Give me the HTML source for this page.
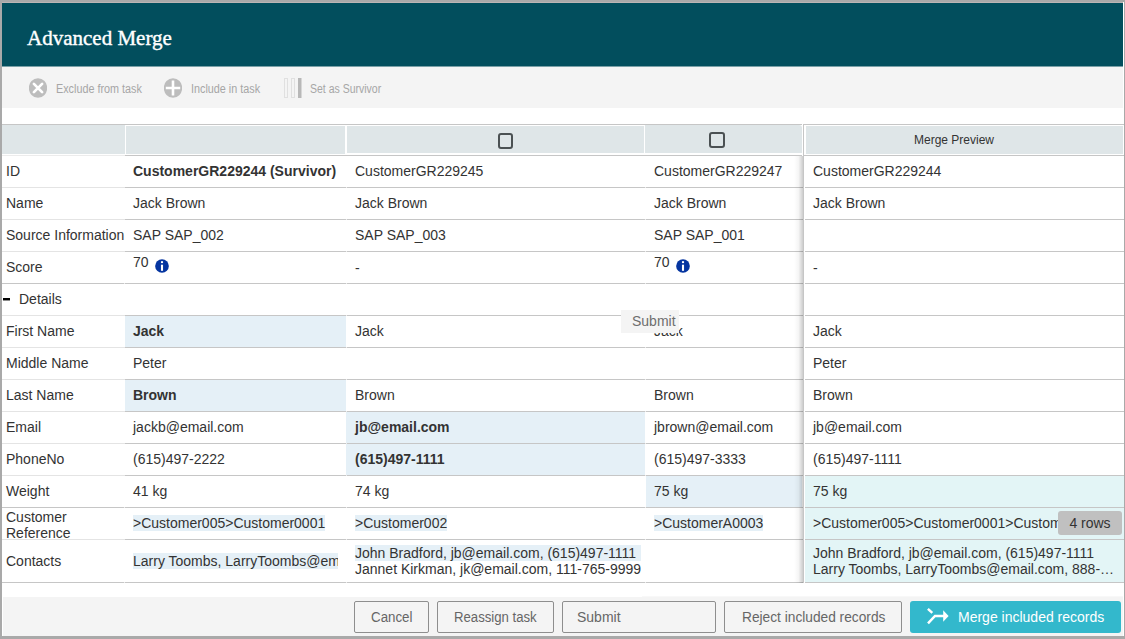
<!DOCTYPE html>
<html><head><meta charset="utf-8">
<style>
html,body{margin:0;padding:0;}
body{width:1125px;height:639px;position:relative;overflow:hidden;background:#a9a9a9;font-family:"Liberation Sans",sans-serif;}
.a{position:absolute;}
#dlg{left:2px;top:2px;width:1122px;height:634px;background:#fff;}
#topline{left:2px;top:2px;width:1121px;height:1px;background:#bcb5b5;}
#hdr{left:2px;top:3px;width:1121px;height:63px;background:#024e5d;}
#title{left:27px;top:25px;font-family:"Liberation Serif",serif;font-size:22px;color:#fff;white-space:nowrap;-webkit-text-stroke:0.4px #fff;transform:scaleX(0.955);transform-origin:0 0;}
#tb{left:2px;top:66px;width:1121px;height:42px;background:#f4f4f4;}
.tbt{font-size:12px;color:#a6a6a6;white-space:nowrap;top:82px;transform:scaleX(0.9);transform-origin:0 0;}
.t{font-size:14px;color:#333;white-space:nowrap;line-height:16px;}
.b{font-weight:bold;}
.hl{background:#e5f0f7;}
.mp{background:#e3f5f6;}
.ln{height:1px;background:#c6c6c6;}
.lnl{height:1px;background:#e4e4e4;}
.btn{top:601px;height:30px;border:1px solid #8e8e8e;border-radius:2px;background:#f4f4f4;box-sizing:content-box;}
.bt{top:609px;font-size:14px;line-height:16px;color:#666;white-space:nowrap;transform-origin:0 0;}
</style></head>
<body>
<div class="a" id="dlg"></div>
<div class="a" id="topline"></div>
<div class="a" id="hdr"></div>
<div class="a" id="title">Advanced Merge</div>
<div class="a" id="tb"></div>
<div class="a" style="left:2px;top:66px;width:1121px;height:1px;background:#7aa0a7"></div>

<!-- toolbar -->
<svg class="a" style="left:29px;top:78px" width="18" height="20" viewBox="0 0 18 20">
 <ellipse cx="9" cy="10" rx="9.2" ry="9.8" fill="#bdbdbd"/>
 <path d="M4.9 5.9 L13.1 14.1 M13.1 5.9 L4.9 14.1" stroke="#fff" stroke-width="2.7" stroke-linecap="round"/>
</svg>
<div class="a tbt" style="left:56px">Exclude from task</div>
<svg class="a" style="left:164px;top:78px" width="18" height="20" viewBox="0 0 18 20">
 <ellipse cx="9" cy="10" rx="9.2" ry="9.8" fill="#bdbdbd"/>
 <path d="M9 2.5 V17.5 M1.8 10 H16.2" stroke="#fff" stroke-width="2.6"/>
</svg>
<div class="a tbt" style="left:191px">Include in task</div>
<svg class="a" style="left:284px;top:78px" width="18" height="20" viewBox="0 0 18 20">
 <rect x="0.5" y="0.5" width="3" height="19" fill="none" stroke="#e0e0e0"/>
 <rect x="7.5" y="0.5" width="3" height="19" fill="none" stroke="#e0e0e0"/>
 <rect x="14" y="0" width="3.5" height="20" fill="#b8b8b8"/>
</svg>
<div class="a tbt" style="left:310px;transform:scaleX(.875)">Set as Survivor</div>

<!-- table header -->
<div class="a ln" style="left:2px;top:124px;width:800px;"></div>
<div class="a ln" style="left:804px;top:124px;width:320px;"></div>
<div class="a" style="left:2px;top:125px;width:123px;height:29px;background:#dfe6e8"></div>
<div class="a" style="left:126px;top:126px;width:219px;height:28px;background:#dfe6e8"></div>
<div class="a" style="left:347px;top:126px;width:297px;height:27px;background:#dfe6e8"></div>
<div class="a" style="left:645px;top:125px;width:157px;height:28px;background:#dfe6e8;border-top-right-radius:3px"></div>
<div class="a" style="left:806px;top:126px;width:317px;height:28px;background:#dfe6e8"></div>
<div class="a" style="left:498px;top:133px;width:11px;height:12px;border:2px solid #4b5153;border-radius:3px"></div>
<div class="a" style="left:709px;top:132px;width:12px;height:12px;border:2px solid #4b5153;border-radius:3px"></div>
<div class="a" style="left:914px;top:126px;line-height:28px;font-size:12px;color:#333;white-space:nowrap">Merge Preview</div>
<div class="a" style="left:2px;top:155px;width:123px;height:1px;background:#ececec"></div><div class="a ln" style="left:125px;top:155px;width:677px;"></div>
<div class="a ln" style="left:804px;top:155px;width:320px;"></div>

<div id="rows">
<div class="a t" style="left:6px;top:163px">ID</div>
<div class="a t b" style="left:133px;top:163px">CustomerGR229244 (Survivor)</div>
<div class="a t" style="left:355px;top:163px">CustomerGR229245</div>
<div class="a t" style="left:654px;top:163px">CustomerGR229247</div>
<div class="a t" style="left:813px;top:163px">CustomerGR229244</div>
<div class="a lnl" style="left:2px;top:187px;width:123px;"></div><div class="a ln" style="left:125px;top:187px;width:678px;"></div><div class="a ln" style="left:805px;top:187px;width:319px;"></div>
<div class="a t" style="left:6px;top:195px">Name</div>
<div class="a t" style="left:133px;top:195px">Jack Brown</div>
<div class="a t" style="left:355px;top:195px">Jack Brown</div>
<div class="a t" style="left:654px;top:195px">Jack Brown</div>
<div class="a t" style="left:813px;top:195px">Jack Brown</div>
<div class="a lnl" style="left:2px;top:219px;width:123px;"></div><div class="a ln" style="left:125px;top:219px;width:678px;"></div><div class="a ln" style="left:805px;top:219px;width:319px;"></div>
<div class="a t" style="left:6px;top:227px">Source Information</div>
<div class="a t" style="left:133px;top:227px">SAP SAP_002</div>
<div class="a t" style="left:355px;top:227px">SAP SAP_003</div>
<div class="a t" style="left:654px;top:227px">SAP SAP_001</div>
<div class="a lnl" style="left:2px;top:251px;width:123px;"></div><div class="a ln" style="left:125px;top:251px;width:678px;"></div><div class="a ln" style="left:805px;top:251px;width:319px;"></div>
<div class="a t" style="left:6px;top:259px">Score</div>
<div class="a t" style="left:133px;top:254px">70</div>
<svg class="a" style="left:155px;top:258px" width="15" height="16" viewBox="0 0 15 16"><circle cx="7" cy="8" r="6.85" fill="#0535a0"/><rect x="5.95" y="3.2" width="2.1" height="1.9" fill="#fff"/><rect x="5.95" y="6.7" width="2.1" height="6.1" fill="#fff"/></svg>
<div class="a t" style="left:355px;top:260px">-</div>
<div class="a t" style="left:654px;top:254px">70</div>
<svg class="a" style="left:676px;top:258px" width="15" height="16" viewBox="0 0 15 16"><circle cx="7" cy="8" r="6.85" fill="#0535a0"/><rect x="5.95" y="3.2" width="2.1" height="1.9" fill="#fff"/><rect x="5.95" y="6.7" width="2.1" height="6.1" fill="#fff"/></svg>
<div class="a t" style="left:813px;top:260px">-</div>
<div class="a ln" style="left:2px;top:283px;width:122px;"></div><div class="a" style="left:124px;top:283px;width:1px;height:1px;background:#ebebeb"></div><div class="a ln" style="left:125px;top:283px;width:678px;"></div><div class="a ln" style="left:805px;top:283px;width:319px;"></div>
<div class="a" style="left:3px;top:298px;width:7px;height:2px;background:#000;box-shadow:0 1px 0 rgba(0,0,0,.45)"></div>
<div class="a t" style="left:19px;top:291px">Details</div>
<div class="a lnl" style="left:2px;top:315px;width:123px;"></div><div class="a ln" style="left:125px;top:315px;width:678px;"></div><div class="a ln" style="left:805px;top:315px;width:319px;"></div>
<div class="a" style="left:125px;top:316px;width:221px;height:31px;background:#e5f0f7"></div>
<div class="a t" style="left:6px;top:323px">First Name</div>
<div class="a t b" style="left:133px;top:323px">Jack</div>
<div class="a t" style="left:355px;top:323px">Jack</div>
<div class="a t" style="left:654px;top:323px">Jack</div>
<div class="a t" style="left:813px;top:323px">Jack</div>
<div class="a lnl" style="left:2px;top:347px;width:123px;"></div><div class="a ln" style="left:125px;top:347px;width:678px;"></div><div class="a ln" style="left:805px;top:347px;width:319px;"></div>
<div class="a t" style="left:6px;top:355px">Middle Name</div>
<div class="a t" style="left:133px;top:355px">Peter</div>
<div class="a t" style="left:813px;top:355px">Peter</div>
<div class="a lnl" style="left:2px;top:379px;width:123px;"></div><div class="a ln" style="left:125px;top:379px;width:678px;"></div><div class="a ln" style="left:805px;top:379px;width:319px;"></div>
<div class="a" style="left:125px;top:380px;width:221px;height:31px;background:#e5f0f7"></div>
<div class="a t" style="left:6px;top:387px">Last Name</div>
<div class="a t b" style="left:133px;top:387px">Brown</div>
<div class="a t" style="left:355px;top:387px">Brown</div>
<div class="a t" style="left:654px;top:387px">Brown</div>
<div class="a t" style="left:813px;top:387px">Brown</div>
<div class="a lnl" style="left:2px;top:411px;width:123px;"></div><div class="a ln" style="left:125px;top:411px;width:678px;"></div><div class="a ln" style="left:805px;top:411px;width:319px;"></div>
<div class="a" style="left:346px;top:412px;width:299px;height:31px;background:#e5f0f7"></div>
<div class="a t" style="left:6px;top:419px">Email</div>
<div class="a t" style="left:133px;top:419px">jackb@email.com</div>
<div class="a t b" style="left:355px;top:419px">jb@email.com</div>
<div class="a t" style="left:654px;top:419px">jbrown@email.com</div>
<div class="a t" style="left:813px;top:419px">jb@email.com</div>
<div class="a lnl" style="left:2px;top:443px;width:123px;"></div><div class="a ln" style="left:125px;top:443px;width:678px;"></div><div class="a ln" style="left:805px;top:443px;width:319px;"></div>
<div class="a" style="left:346px;top:444px;width:299px;height:31px;background:#e5f0f7"></div>
<div class="a t" style="left:6px;top:451px">PhoneNo</div>
<div class="a t" style="left:133px;top:451px">(615)497-2222</div>
<div class="a t b" style="left:355px;top:451px">(615)497-1111</div>
<div class="a t" style="left:654px;top:451px">(615)497-3333</div>
<div class="a t" style="left:813px;top:451px">(615)497-1111</div>
<div class="a lnl" style="left:2px;top:475px;width:123px;"></div><div class="a ln" style="left:125px;top:475px;width:678px;"></div><div class="a ln" style="left:805px;top:475px;width:319px;"></div>
<div class="a" style="left:646px;top:476px;width:156px;height:31px;background:#e5f0f7"></div>
<div class="a" style="left:805px;top:476px;width:319px;height:31px;background:#e3f5f6"></div>
<div class="a t" style="left:6px;top:483px">Weight</div>
<div class="a t" style="left:133px;top:483px">41 kg</div>
<div class="a t" style="left:355px;top:483px">74 kg</div>
<div class="a t" style="left:654px;top:483px">75 kg</div>
<div class="a t" style="left:813px;top:483px">75 kg</div>
<div class="a ln" style="left:2px;top:507px;width:122px;"></div><div class="a" style="left:124px;top:507px;width:1px;height:1px;background:#ebebeb"></div><div class="a ln" style="left:125px;top:507px;width:678px;"></div><div class="a ln" style="left:805px;top:507px;width:319px;"></div>
<div class="a mp" style="left:805px;top:508px;width:319px;height:31px"></div>
<div class="a t" style="left:6px;top:509px;line-height:16px">Customer<br>Reference</div>
<div class="a t" style="left:133px;top:515px"><span class="hl">&gt;Customer005&gt;Customer0001</span></div>
<div class="a t" style="left:355px;top:515px"><span class="hl">&gt;Customer002</span></div>
<div class="a t" style="left:654px;top:515px"><span class="hl">&gt;CustomerA0003</span></div>
<div class="a t" style="left:813px;top:515px;width:250px;overflow:hidden">&gt;Customer005&gt;Customer0001&gt;Customer0002</div>
<div class="a" style="left:1058px;top:511px;width:64px;height:24px;background:#c0c0c0;border-radius:3px;font-size:14px;color:#333;line-height:24px;text-align:center">4 rows</div>
<div class="a lnl" style="left:2px;top:539px;width:123px;"></div><div class="a ln" style="left:125px;top:539px;width:678px;"></div><div class="a ln" style="left:805px;top:539px;width:319px;"></div>
<div class="a mp" style="left:805px;top:540px;width:319px;height:42px"></div>
<div class="a t" style="left:6px;top:553px">Contacts</div>
<div class="a t" style="left:133px;top:553px;width:205px;overflow:hidden"><span class="hl">Larry Toombs, LarryToombs@email.com</span></div>
<div class="a t" style="left:355px;top:545px"><span class="hl" style="padding-right:5px">John Bradford, jb@email.com, (615)497-1111</span><br>Jannet Kirkman, jk@email.com, 111-765-9999</div>
<div class="a t" style="left:813px;top:545px">John Bradford, jb@email.com, (615)497-1111<br>Larry Toombs, LarryToombs@email.com, 888-…</div>
<div class="a ln" style="left:2px;top:582px;width:122px;"></div><div class="a" style="left:124px;top:582px;width:1px;height:1px;background:#ebebeb"></div><div class="a ln" style="left:125px;top:582px;width:678px;"></div><div class="a ln" style="left:805px;top:582px;width:319px;"></div>
<div class="a" style="left:794px;top:156px;width:9px;height:427px;background:linear-gradient(to right,rgba(0,0,0,0),rgba(0,0,0,0.04) 50%,rgba(0,0,0,0.2))"></div>
<div class="a" style="left:803px;top:124px;width:1px;height:459px;background:#c6c6c6"></div>
<div class="a" style="z-index:2;left:621px;top:310px;width:58px;height:23px;background:#f4f4f4;font-size:14px;color:#6e6e6e;line-height:23px;text-align:right;padding-right:0"><span style="position:absolute;left:11px">Submit</span></div>
<div class="a" style="left:346px;top:187px;width:1px;height:1px;background:#ebebeb"></div><div class="a" style="left:645px;top:187px;width:1px;height:1px;background:#ebebeb"></div>
<div class="a" style="left:346px;top:219px;width:1px;height:1px;background:#ebebeb"></div><div class="a" style="left:645px;top:219px;width:1px;height:1px;background:#ebebeb"></div>
<div class="a" style="left:346px;top:251px;width:1px;height:1px;background:#ebebeb"></div><div class="a" style="left:645px;top:251px;width:1px;height:1px;background:#ebebeb"></div>
<div class="a" style="left:346px;top:283px;width:1px;height:1px;background:#ebebeb"></div><div class="a" style="left:645px;top:283px;width:1px;height:1px;background:#ebebeb"></div>
<div class="a" style="left:346px;top:315px;width:1px;height:1px;background:#ebebeb"></div><div class="a" style="left:645px;top:315px;width:1px;height:1px;background:#ebebeb"></div>
<div class="a" style="left:346px;top:347px;width:1px;height:1px;background:#ebebeb"></div><div class="a" style="left:645px;top:347px;width:1px;height:1px;background:#ebebeb"></div>
<div class="a" style="left:346px;top:379px;width:1px;height:1px;background:#ebebeb"></div><div class="a" style="left:645px;top:379px;width:1px;height:1px;background:#ebebeb"></div>
<div class="a" style="left:346px;top:411px;width:1px;height:1px;background:#ebebeb"></div><div class="a" style="left:645px;top:411px;width:1px;height:1px;background:#ebebeb"></div>
<div class="a" style="left:346px;top:443px;width:1px;height:1px;background:#ebebeb"></div><div class="a" style="left:645px;top:443px;width:1px;height:1px;background:#ebebeb"></div>
<div class="a" style="left:346px;top:475px;width:1px;height:1px;background:#ebebeb"></div><div class="a" style="left:645px;top:475px;width:1px;height:1px;background:#ebebeb"></div>
<div class="a" style="left:346px;top:507px;width:1px;height:1px;background:#ebebeb"></div><div class="a" style="left:645px;top:507px;width:1px;height:1px;background:#ebebeb"></div>
<div class="a" style="left:346px;top:539px;width:1px;height:1px;background:#ebebeb"></div><div class="a" style="left:645px;top:539px;width:1px;height:1px;background:#ebebeb"></div>
<div class="a" style="left:346px;top:582px;width:1px;height:1px;background:#ebebeb"></div><div class="a" style="left:645px;top:582px;width:1px;height:1px;background:#ebebeb"></div>
</div>

<!-- footer -->
<div class="a" style="left:3px;top:597px;width:1120px;height:39px;background:#f4f4f4"></div>
<div class="a" style="left:642px;top:596px;width:481px;height:1px;background:#f8f8f8"></div>
<div class="a btn" style="left:354px;width:73px"></div>
<div class="a btn" style="left:437px;width:115px"></div>
<div class="a btn" style="left:562px;width:152px"></div>
<div class="a btn" style="left:724px;width:176px"></div>
<div class="a" style="left:910px;top:601px;width:211px;height:32px;border-radius:3px;background:#33b8cc"></div>
<div class="a bt" style="left:371px;transform:scaleX(.952)">Cancel</div>
<div class="a bt" style="left:454px;transform:scaleX(.94)">Reassign task</div>
<div class="a bt" style="left:577px">Submit</div>
<div class="a bt" style="left:742px;transform:scaleX(.98)">Reject included records</div>
<div class="a bt" style="left:958px;color:#fff">Merge included records</div>
<svg class="a" style="left:920px;top:602px" width="40" height="28" viewBox="0 0 40 28">
 <path d="M7.9 6.9 L12.3 10.9 M8 21.3 L15 14 H24" stroke="#fff" stroke-width="2.5" fill="none"/>
 <path d="M23.2 8.2 L28.6 14 L23.2 19.8 Z" fill="#fff"/>
</svg>
</body></html>
